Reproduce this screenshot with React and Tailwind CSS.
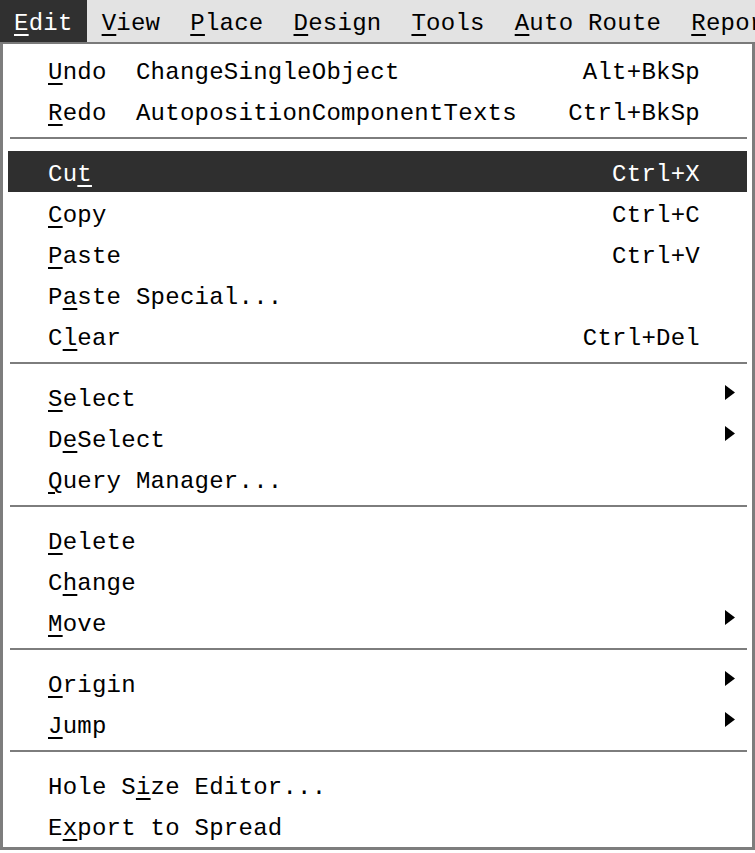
import React from "react";

const U = ({ children }) => (
  <span className="underline decoration-2 underline-offset-[4px]">{children}</span>
);

function Arrow() {
  return (
    <svg width="10" height="15" viewBox="0 0 10 15" className="block">
      <polygon points="0,0 10,7.5 0,15" fill="#000" />
    </svg>
  );
}

function Row({ label, shortcut, sub, active }) {
  return (
    <div
      className={
        "flex items-center h-[41px] pt-[6px] pl-[40px] pr-[12px] whitespace-pre " +
        (active ? "bg-[#2f2f2f] text-white" : "")
      }
    >
      <div className="flex-1">{label}</div>
      {shortcut ? <div>{shortcut}</div> : null}
      <div className="w-[35px] flex justify-end items-center -mt-[14px]">
        {sub ? <Arrow /> : null}
      </div>
    </div>
  );
}

function Sep() {
  return (
    <div className="h-[20px] pt-[6px]">
      <div className="h-[2px] ml-[2px] bg-[#7d7d7d]" />
    </div>
  );
}

export default function App() {
  return (
    <div className="w-[755px] h-[853px] overflow-hidden bg-white text-black font-['Liberation_Mono',monospace] text-[24px] tracking-[0.25px]">
      <div className="flex h-[44px] bg-[#e3e3e3] border-b-[2px] border-[#7a7a7a] whitespace-nowrap overflow-hidden">
        <div className="flex items-center pt-[5px] px-[14px] bg-[#303030] text-white">
          <span><U>E</U>dit</span>
        </div>
        <div className="flex items-center pt-[5px] px-[15px]"><span><U>V</U>iew</span></div>
        <div className="flex items-center pt-[5px] px-[15px]"><span><U>P</U>lace</span></div>
        <div className="flex items-center pt-[5px] px-[15px]"><span><U>D</U>esign</span></div>
        <div className="flex items-center pt-[5px] px-[15px]"><span><U>T</U>ools</span></div>
        <div className="flex items-center pt-[5px] px-[15px]"><span><U>A</U>uto Route</span></div>
        <div className="flex items-center pt-[5px] px-[15px]"><span><U>R</U>eports</span></div>
      </div>
      <div className="border-x-[3px] border-b-[3px] border-[#7d7d7d] px-[5px] pt-[5px] pb-[1px]">
        <Row label={<><U>U</U>ndo  ChangeSingleObject</>} shortcut="Alt+BkSp" />
        <Row label={<><U>R</U>edo  AutopositionComponentTexts</>} shortcut="Ctrl+BkSp" />
        <Sep />
        <Row active label={<>Cu<U>t</U></>} shortcut="Ctrl+X" />
        <Row label={<><U>C</U>opy</>} shortcut="Ctrl+C" />
        <Row label={<><U>P</U>aste</>} shortcut="Ctrl+V" />
        <Row label={<>P<U>a</U>ste Special...</>} />
        <Row label={<>C<U>l</U>ear</>} shortcut="Ctrl+Del" />
        <Sep />
        <Row label={<><U>S</U>elect</>} sub />
        <Row label={<>D<U>e</U>Select</>} sub />
        <Row label={<><U>Q</U>uery Manager...</>} />
        <Sep />
        <Row label={<><U>D</U>elete</>} />
        <Row label={<>C<U>h</U>ange</>} />
        <Row label={<><U>M</U>ove</>} sub />
        <Sep />
        <Row label={<><U>O</U>rigin</>} sub />
        <Row label={<><U>J</U>ump</>} sub />
        <Sep />
        <Row label={<>Hole S<U>i</U>ze Editor...</>} />
        <Row label={<>E<U>x</U>port to Spread</>} />
      </div>
    </div>
  );
}
